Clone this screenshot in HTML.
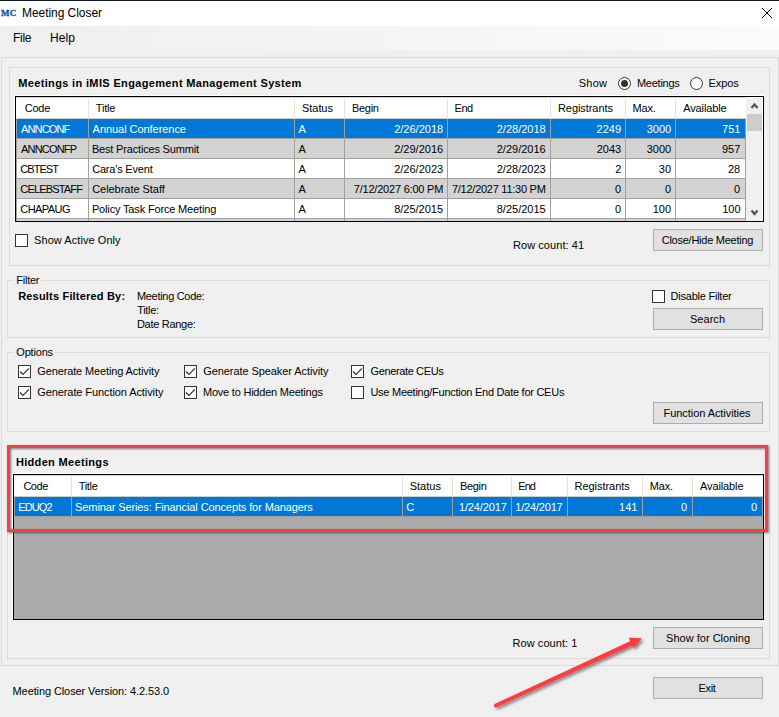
<!DOCTYPE html>
<html><head><meta charset="utf-8"><title>Meeting Closer</title>
<style>
*{box-sizing:border-box;margin:0;padding:0}
html,body{width:779px;height:717px;overflow:hidden;background:#f0f0f0}
body{position:relative;font-family:"Liberation Sans",sans-serif;font-size:11px;color:#000;line-height:16px}
.p{position:absolute}
.t{position:absolute;white-space:nowrap;line-height:16px}
.gb{position:absolute;border:1px solid #dcdcdc}
.gap{position:absolute;background:#f0f0f0;height:3px}
.btn{position:absolute;left:653px;width:110px;height:22px;background:#e1e1e1;border:1px solid #adadad}
.cb{position:absolute;width:13px;height:13px;background:#fff;border:1px solid #333}
.cb svg{position:absolute;left:0;top:0}
.rd{position:absolute;width:13px;height:13px;border-radius:50%;background:#fff;border:1px solid #333}
.rd i{position:absolute;left:2px;top:2px;width:7px;height:7px;border-radius:50%;background:#333}
.grid{position:absolute;border:1px solid #000;background:#ababab;overflow:hidden}
.grid .p{margin:-1px 0 0 -1px}
</style></head><body>
<div class="p" style="left:0;top:0;width:779px;height:26px;background:#fff"></div>
<div class="p" style="left:0;top:0;width:779px;height:1px;background:#0d1a2e"></div>
<div class="p" style="left:0;top:26px;width:779px;height:24px;background:linear-gradient(to right,#f0f0f0 0,#f0f0f0 9%,#fbfbfb 100%)"></div>
<div class="t" id="mc" style="left:1px;top:5px;color:#0f58ab;font-family:'Liberation Serif',serif;font-size:9px;font-weight:bold;letter-spacing:0.3px;-webkit-text-stroke:0.35px #0f58ab">MC</div>
<svg class="p" style="left:761px;top:7px" width="12" height="12"><path d="M1 1 L11 11 M11 1 L1 11" stroke="#000" stroke-width="1" fill="none"/></svg>
<div class="gb" style="left:1px;top:57px;width:778px;height:609px"></div>
<div class="gb" style="left:9px;top:67px;width:761px;height:199px"></div>
<div class="rd" style="left:618px;top:77px"><i></i></div>
<div class="rd" style="left:690px;top:77px"></div>
<div class="p" style="left:14px;top:95px;width:750px;height:127px;background:#fff"></div>
<div class="grid" style="left:15px;top:96px;width:749px;height:126px">
<div class="p" style="left:1px;top:1px;width:730px;height:22px;background:#fff"></div>
<div class="p" style="left:73px;top:3px;width:1px;height:19px;background:#e2e2e2"></div>
<div class="p" style="left:279px;top:3px;width:1px;height:19px;background:#e2e2e2"></div>
<div class="p" style="left:329px;top:3px;width:1px;height:19px;background:#e2e2e2"></div>
<div class="p" style="left:432px;top:3px;width:1px;height:19px;background:#e2e2e2"></div>
<div class="p" style="left:535px;top:3px;width:1px;height:19px;background:#e2e2e2"></div>
<div class="p" style="left:610px;top:3px;width:1px;height:19px;background:#e2e2e2"></div>
<div class="p" style="left:660px;top:3px;width:1px;height:19px;background:#e2e2e2"></div>
<div class="p" style="left:1px;top:1px;width:747px;height:1px;background:#d4d4d4"></div>
<div class="p" style="left:1px;top:22px;width:730px;height:1px;background:#d2ccc6"></div>
<div class="p" style="left:1px;top:23px;width:730px;height:20px;background:#a0a0a0"></div>
<div class="p" style="left:2px;top:23px;width:71px;height:19px;background:#0078d7"></div>
<div class="p" style="left:74px;top:23px;width:205px;height:19px;background:#0078d7"></div>
<div class="p" style="left:280px;top:23px;width:49px;height:19px;background:#0078d7"></div>
<div class="p" style="left:330px;top:23px;width:102px;height:19px;background:#0078d7"></div>
<div class="p" style="left:433px;top:23px;width:102px;height:19px;background:#0078d7"></div>
<div class="p" style="left:536px;top:23px;width:74px;height:19px;background:#0078d7"></div>
<div class="p" style="left:611px;top:23px;width:49px;height:19px;background:#0078d7"></div>
<div class="p" style="left:661px;top:23px;width:69px;height:19px;background:#0078d7"></div>
<div class="p" style="left:1px;top:43px;width:730px;height:20px;background:#a0a0a0"></div>
<div class="p" style="left:2px;top:43px;width:71px;height:19px;background:#d3d3d3"></div>
<div class="p" style="left:74px;top:43px;width:205px;height:19px;background:#d3d3d3"></div>
<div class="p" style="left:280px;top:43px;width:49px;height:19px;background:#d3d3d3"></div>
<div class="p" style="left:330px;top:43px;width:102px;height:19px;background:#d3d3d3"></div>
<div class="p" style="left:433px;top:43px;width:102px;height:19px;background:#d3d3d3"></div>
<div class="p" style="left:536px;top:43px;width:74px;height:19px;background:#d3d3d3"></div>
<div class="p" style="left:611px;top:43px;width:49px;height:19px;background:#d3d3d3"></div>
<div class="p" style="left:661px;top:43px;width:69px;height:19px;background:#d3d3d3"></div>
<div class="p" style="left:1px;top:63px;width:730px;height:20px;background:#a0a0a0"></div>
<div class="p" style="left:2px;top:63px;width:71px;height:19px;background:#fff"></div>
<div class="p" style="left:74px;top:63px;width:205px;height:19px;background:#fff"></div>
<div class="p" style="left:280px;top:63px;width:49px;height:19px;background:#fff"></div>
<div class="p" style="left:330px;top:63px;width:102px;height:19px;background:#fff"></div>
<div class="p" style="left:433px;top:63px;width:102px;height:19px;background:#fff"></div>
<div class="p" style="left:536px;top:63px;width:74px;height:19px;background:#fff"></div>
<div class="p" style="left:611px;top:63px;width:49px;height:19px;background:#fff"></div>
<div class="p" style="left:661px;top:63px;width:69px;height:19px;background:#fff"></div>
<div class="p" style="left:1px;top:83px;width:730px;height:20px;background:#a0a0a0"></div>
<div class="p" style="left:2px;top:83px;width:71px;height:19px;background:#d3d3d3"></div>
<div class="p" style="left:74px;top:83px;width:205px;height:19px;background:#d3d3d3"></div>
<div class="p" style="left:280px;top:83px;width:49px;height:19px;background:#d3d3d3"></div>
<div class="p" style="left:330px;top:83px;width:102px;height:19px;background:#d3d3d3"></div>
<div class="p" style="left:433px;top:83px;width:102px;height:19px;background:#d3d3d3"></div>
<div class="p" style="left:536px;top:83px;width:74px;height:19px;background:#d3d3d3"></div>
<div class="p" style="left:611px;top:83px;width:49px;height:19px;background:#d3d3d3"></div>
<div class="p" style="left:661px;top:83px;width:69px;height:19px;background:#d3d3d3"></div>
<div class="p" style="left:1px;top:103px;width:730px;height:20px;background:#a0a0a0"></div>
<div class="p" style="left:2px;top:103px;width:71px;height:19px;background:#fff"></div>
<div class="p" style="left:74px;top:103px;width:205px;height:19px;background:#fff"></div>
<div class="p" style="left:280px;top:103px;width:49px;height:19px;background:#fff"></div>
<div class="p" style="left:330px;top:103px;width:102px;height:19px;background:#fff"></div>
<div class="p" style="left:433px;top:103px;width:102px;height:19px;background:#fff"></div>
<div class="p" style="left:536px;top:103px;width:74px;height:19px;background:#fff"></div>
<div class="p" style="left:611px;top:103px;width:49px;height:19px;background:#fff"></div>
<div class="p" style="left:661px;top:103px;width:69px;height:19px;background:#fff"></div>
<div class="p" style="left:1px;top:123px;width:730px;height:20px;background:#a0a0a0"></div>
<div class="p" style="left:2px;top:123px;width:71px;height:19px;background:#d3d3d3"></div>
<div class="p" style="left:74px;top:123px;width:205px;height:19px;background:#d3d3d3"></div>
<div class="p" style="left:280px;top:123px;width:49px;height:19px;background:#d3d3d3"></div>
<div class="p" style="left:330px;top:123px;width:102px;height:19px;background:#d3d3d3"></div>
<div class="p" style="left:433px;top:123px;width:102px;height:19px;background:#d3d3d3"></div>
<div class="p" style="left:536px;top:123px;width:74px;height:19px;background:#d3d3d3"></div>
<div class="p" style="left:611px;top:123px;width:49px;height:19px;background:#d3d3d3"></div>
<div class="p" style="left:661px;top:123px;width:69px;height:19px;background:#d3d3d3"></div>
<div class="p" style="left:731px;top:1px;width:17px;height:124px;background:#f0f0f0;border-top:1px solid #fff;border-right:1px solid #fff"></div>
<div class="p" style="left:732px;top:18px;width:15px;height:17px;background:#cdcdcd"></div>
<svg class="p" style="left:734px;top:5px" width="11" height="9"><path d="M2.5 7 L5.5 3.6 L8.5 7" stroke="#555" stroke-width="2.3" fill="none"/></svg>
<svg class="p" style="left:734px;top:112px" width="11" height="9"><path d="M2.5 2.6 L5.5 6 L8.5 2.6" stroke="#555" stroke-width="2.3" fill="none"/></svg></div>
<div class="cb" style="left:15px;top:234px"></div>
<div class="btn" style="top:229px"></div>
<div class="gb" style="left:7px;top:280px;width:763px;height:58px"></div>
<div class="gap" style="left:14px;top:279px;width:27px"></div>
<div class="cb" style="left:652px;top:290px"></div>
<div class="btn" style="top:308px"></div>
<div class="gb" style="left:7px;top:352px;width:763px;height:80px"></div>
<div class="gap" style="left:14px;top:351px;width:41px"></div>
<div class="cb" style="left:18px;top:365px"><svg width="11" height="11"><path d="M1 5.5 L4 8.5 L9.9 2.3" stroke="#333" stroke-width="1.2" fill="none"/></svg></div><div class="cb" style="left:18px;top:386px"><svg width="11" height="11"><path d="M1 5.5 L4 8.5 L9.9 2.3" stroke="#333" stroke-width="1.2" fill="none"/></svg></div><div class="cb" style="left:184px;top:365px"><svg width="11" height="11"><path d="M1 5.5 L4 8.5 L9.9 2.3" stroke="#333" stroke-width="1.2" fill="none"/></svg></div><div class="cb" style="left:184px;top:386px"><svg width="11" height="11"><path d="M1 5.5 L4 8.5 L9.9 2.3" stroke="#333" stroke-width="1.2" fill="none"/></svg></div><div class="cb" style="left:351px;top:365px"><svg width="11" height="11"><path d="M1 5.5 L4 8.5 L9.9 2.3" stroke="#333" stroke-width="1.2" fill="none"/></svg></div><div class="cb" style="left:351px;top:386px"></div>
<div class="btn" style="top:402px"></div>
<div class="gb" style="left:7px;top:445px;width:763px;height:214px"></div>
<div class="p" style="left:12px;top:473px;width:752px;height:147px;background:#fff"></div>
<div class="grid" style="left:13px;top:474px;width:751px;height:146px">
<div class="p" style="left:1px;top:1px;width:749px;height:22px;background:#fff"></div>
<div class="p" style="left:58px;top:3px;width:1px;height:19px;background:#e2e2e2"></div>
<div class="p" style="left:389px;top:3px;width:1px;height:19px;background:#e2e2e2"></div>
<div class="p" style="left:439px;top:3px;width:1px;height:19px;background:#e2e2e2"></div>
<div class="p" style="left:498px;top:3px;width:1px;height:19px;background:#e2e2e2"></div>
<div class="p" style="left:554px;top:3px;width:1px;height:19px;background:#e2e2e2"></div>
<div class="p" style="left:629px;top:3px;width:1px;height:19px;background:#e2e2e2"></div>
<div class="p" style="left:679px;top:3px;width:1px;height:19px;background:#e2e2e2"></div>
<div class="p" style="left:1px;top:1px;width:749px;height:1px;background:#d4d4d4"></div>
<div class="p" style="left:1px;top:22px;width:749px;height:1px;background:#d2ccc6"></div>
<div class="p" style="left:1px;top:23px;width:749px;height:20px;background:#a0a0a0"></div>
<div class="p" style="left:2px;top:23px;width:56px;height:19px;background:#0078d7"></div>
<div class="p" style="left:59px;top:23px;width:330px;height:19px;background:#0078d7"></div>
<div class="p" style="left:390px;top:23px;width:49px;height:19px;background:#0078d7"></div>
<div class="p" style="left:440px;top:23px;width:58px;height:19px;background:#0078d7"></div>
<div class="p" style="left:499px;top:23px;width:55px;height:19px;background:#0078d7"></div>
<div class="p" style="left:555px;top:23px;width:74px;height:19px;background:#0078d7"></div>
<div class="p" style="left:630px;top:23px;width:49px;height:19px;background:#0078d7"></div>
<div class="p" style="left:680px;top:23px;width:69px;height:19px;background:#0078d7"></div>
</div>
<div class="btn" style="top:627px"></div>
<div class="btn" style="top:677px"></div>
<span class="t" style="left:21.96px;top:5px;font-size:12px;letter-spacing:-0.05px">Meeting Closer</span>
<span class="t" style="left:12.96px;top:30px;font-size:12px;letter-spacing:-0.25px">File</span>
<span class="t" style="left:49.94px;top:30px;font-size:12px;letter-spacing:0.07px">Help</span>
<span class="t" style="left:18.21px;top:75px;font-weight:bold;letter-spacing:0.35px">Meetings in iMIS Engagement Management System</span>
<span class="t" style="left:578.67px;top:75px;letter-spacing:0.29px">Show</span>
<span class="t" style="left:636.94px;top:75px;letter-spacing:-0.25px">Meetings</span>
<span class="t" style="left:708.56px;top:75px;letter-spacing:-0.10px">Expos</span>
<span class="t" style="left:24.72px;top:100px;letter-spacing:-0.23px">Code</span>
<span class="t" style="left:95.82px;top:100px;letter-spacing:-0.19px">Title</span>
<span class="t" style="left:302.09px;top:100px;letter-spacing:-0.07px">Status</span>
<span class="t" style="left:351.94px;top:100px;letter-spacing:-0.28px">Begin</span>
<span class="t" style="left:454.56px;top:100px;letter-spacing:-0.45px">End</span>
<span class="t" style="left:557.94px;top:100px;letter-spacing:-0.06px">Registrants</span>
<span class="t" style="left:632.56px;top:100px;letter-spacing:-0.17px">Max.</span>
<span class="t" style="left:683.23px;top:100px;letter-spacing:-0.12px">Available</span>
<span class="t" style="left:21.01px;top:121px;color:#fff;letter-spacing:-0.85px">ANNCONF</span>
<span class="t" style="left:92.62px;top:121px;color:#fff;letter-spacing:-0.05px">Annual Conference</span>
<span class="t" style="left:298.62px;top:121px;color:#fff">A</span>
<span class="t" style="left:394.20px;top:121px;color:#fff">2/26/2018</span>
<span class="t" style="left:496.74px;top:121px;color:#fff">2/28/2018</span>
<span class="t" style="left:596.58px;top:121px;color:#fff">2249</span>
<span class="t" style="left:646.69px;top:121px;color:#fff">3000</span>
<span class="t" style="left:722.11px;top:121px;color:#fff">751</span>
<span class="t" style="left:21.01px;top:141px;letter-spacing:-0.80px">ANNCONFP</span>
<span class="t" style="left:91.94px;top:141px;letter-spacing:-0.18px">Best Practices Summit</span>
<span class="t" style="left:298.62px;top:141px">A</span>
<span class="t" style="left:394.20px;top:141px">2/29/2016</span>
<span class="t" style="left:496.74px;top:141px">2/29/2016</span>
<span class="t" style="left:596.73px;top:141px">2043</span>
<span class="t" style="left:646.69px;top:141px">3000</span>
<span class="t" style="left:721.99px;top:141px">957</span>
<span class="t" style="left:20.34px;top:161px;letter-spacing:-0.95px">CBTEST</span>
<span class="t" style="left:92.16px;top:161px;letter-spacing:-0.19px">Cara's Event</span>
<span class="t" style="left:298.62px;top:161px">A</span>
<span class="t" style="left:394.20px;top:161px">2/26/2023</span>
<span class="t" style="left:496.74px;top:161px">2/28/2023</span>
<span class="t" style="left:615.18px;top:161px">2</span>
<span class="t" style="left:658.81px;top:161px">30</span>
<span class="t" style="left:728.01px;top:161px">28</span>
<span class="t" style="left:20.34px;top:181px;letter-spacing:-0.83px">CELEBSTAFF</span>
<span class="t" style="left:92.16px;top:181px;letter-spacing:-0.04px">Celebrate Staff</span>
<span class="t" style="left:298.62px;top:181px">A</span>
<span class="t" style="left:353.76px;top:181px;letter-spacing:-0.21px">7/12/2027 6:00 PM</span>
<span class="t" style="left:451.98px;top:181px;letter-spacing:-0.26px">7/12/2027 11:30 PM</span>
<span class="t" style="left:615.05px;top:181px">0</span>
<span class="t" style="left:665.05px;top:181px">0</span>
<span class="t" style="left:734.09px;top:181px">0</span>
<span class="t" style="left:20.34px;top:201px;letter-spacing:-0.56px">CHAPAUG</span>
<span class="t" style="left:91.94px;top:201px;letter-spacing:-0.16px">Policy Task Force Meeting</span>
<span class="t" style="left:298.62px;top:201px">A</span>
<span class="t" style="left:394.17px;top:201px">8/25/2015</span>
<span class="t" style="left:496.74px;top:201px">8/25/2015</span>
<span class="t" style="left:615.05px;top:201px">0</span>
<span class="t" style="left:652.69px;top:201px">100</span>
<span class="t" style="left:722.19px;top:201px">100</span>
<span class="t" style="left:34.09px;top:232px;letter-spacing:0.06px">Show Active Only</span>
<span class="t" style="left:513.00px;top:237px;letter-spacing:0.06px">Row count: 41</span>
<span class="t" style="left:661.72px;top:232px;letter-spacing:-0.25px">Close/Hide Meeting</span>
<span class="t" style="left:16.31px;top:272px;letter-spacing:-0.25px">Filter</span>
<span class="t" style="left:18.17px;top:288px;font-weight:bold;letter-spacing:0.19px">Results Filtered By:</span>
<span class="t" style="left:136.94px;top:288px;letter-spacing:-0.30px">Meeting Code:</span>
<span class="t" style="left:137.24px;top:302px;letter-spacing:-0.31px">Title:</span>
<span class="t" style="left:136.94px;top:316px;letter-spacing:-0.29px">Date Range:</span>
<span class="t" style="left:670.56px;top:288px;letter-spacing:-0.23px">Disable Filter</span>
<span class="t" style="left:689.92px;top:311px;letter-spacing:0.05px">Search</span>
<span class="t" style="left:16.34px;top:344px;letter-spacing:-0.19px">Options</span>
<span class="t" style="left:37.25px;top:363px;letter-spacing:-0.13px">Generate Meeting Activity</span>
<span class="t" style="left:37.25px;top:384px;letter-spacing:-0.09px">Generate Function Activity</span>
<span class="t" style="left:203.25px;top:363px;letter-spacing:-0.08px">Generate Speaker Activity</span>
<span class="t" style="left:203.00px;top:384px;letter-spacing:-0.22px">Move to Hidden Meetings</span>
<span class="t" style="left:370.61px;top:363px;letter-spacing:-0.38px">Generate CEUs</span>
<span class="t" style="left:370.42px;top:384px;letter-spacing:-0.26px">Use Meeting/Function End Date for CEUs</span>
<span class="t" style="left:663.56px;top:405px;letter-spacing:-0.06px">Function Activities</span>
<span class="t" style="left:15.90px;top:454px;font-weight:bold;letter-spacing:0.33px">Hidden Meetings</span>
<span class="t" style="left:23.38px;top:478px;letter-spacing:-0.46px">Code</span>
<span class="t" style="left:78.82px;top:478px;letter-spacing:-0.35px">Title</span>
<span class="t" style="left:409.67px;top:478px;letter-spacing:0.01px">Status</span>
<span class="t" style="left:460.00px;top:478px;letter-spacing:-0.32px">Begin</span>
<span class="t" style="left:518.31px;top:478px;letter-spacing:-0.96px">End</span>
<span class="t" style="left:574.56px;top:478px;letter-spacing:-0.04px">Registrants</span>
<span class="t" style="left:649.84px;top:478px;letter-spacing:-0.20px">Max.</span>
<span class="t" style="left:700.01px;top:478px;letter-spacing:-0.11px">Available</span>
<span class="t" style="left:18.31px;top:499px;color:#fff;letter-spacing:-0.92px">EDUQ2</span>
<span class="t" style="left:75.11px;top:499px;color:#fff;letter-spacing:-0.11px">Seminar Series: Financial Concepts for Managers</span>
<span class="t" style="left:406.34px;top:499px;color:#fff">C</span>
<span class="t" style="left:458.96px;top:499px;color:#fff;letter-spacing:-0.14px">1/24/2017</span>
<span class="t" style="left:515.23px;top:499px;color:#fff;letter-spacing:-0.18px">1/24/2017</span>
<span class="t" style="left:619.11px;top:499px;color:#fff">141</span>
<span class="t" style="left:681.09px;top:499px;color:#fff">0</span>
<span class="t" style="left:751.09px;top:499px;color:#fff">0</span>
<span class="t" style="left:512.56px;top:635px;letter-spacing:0.06px">Row count: 1</span>
<span class="t" style="left:666.11px;top:630px;letter-spacing:0.01px">Show for Cloning</span>
<span class="t" style="left:12.56px;top:683px;letter-spacing:-0.10px">Meeting Closer Version: 4.2.53.0</span>
<span class="t" style="left:698.56px;top:680px;letter-spacing:-0.32px">Exit</span>
<svg class="p" style="left:0;top:0" width="779" height="717">
 <defs>
 <filter id="sh" x="-5%" y="-10%" width="110%" height="120%"><feGaussianBlur in="SourceAlpha" stdDeviation="1.3"/><feOffset dx="0.7" dy="0.7"/><feComponentTransfer><feFuncA type="linear" slope="0.5"/></feComponentTransfer><feMerge><feMergeNode/><feMergeNode in="SourceGraphic"/></feMerge></filter>
 <filter id="sh2" x="-10%" y="-20%" width="120%" height="140%"><feGaussianBlur in="SourceAlpha" stdDeviation="1.7"/><feOffset dx="1.5" dy="2"/><feComponentTransfer><feFuncA type="linear" slope="0.45"/></feComponentTransfer><feMerge><feMergeNode/><feMergeNode in="SourceGraphic"/></feMerge></filter>
 </defs>
 <rect x="8.5" y="446.5" width="758" height="84" fill="none" stroke="#fc3d40" stroke-width="3" filter="url(#sh)"/>
 <path filter="url(#sh2)" fill="#fc3d40" d="M495.06 703.68 L630.05 641.22 L628.9 637.8 L642 638.2 L633.4 648.1 L632.05 645.58 L496.74 707.32 A2 2 0 0 1 495.06 703.68 Z"/>
</svg>
</body></html>
